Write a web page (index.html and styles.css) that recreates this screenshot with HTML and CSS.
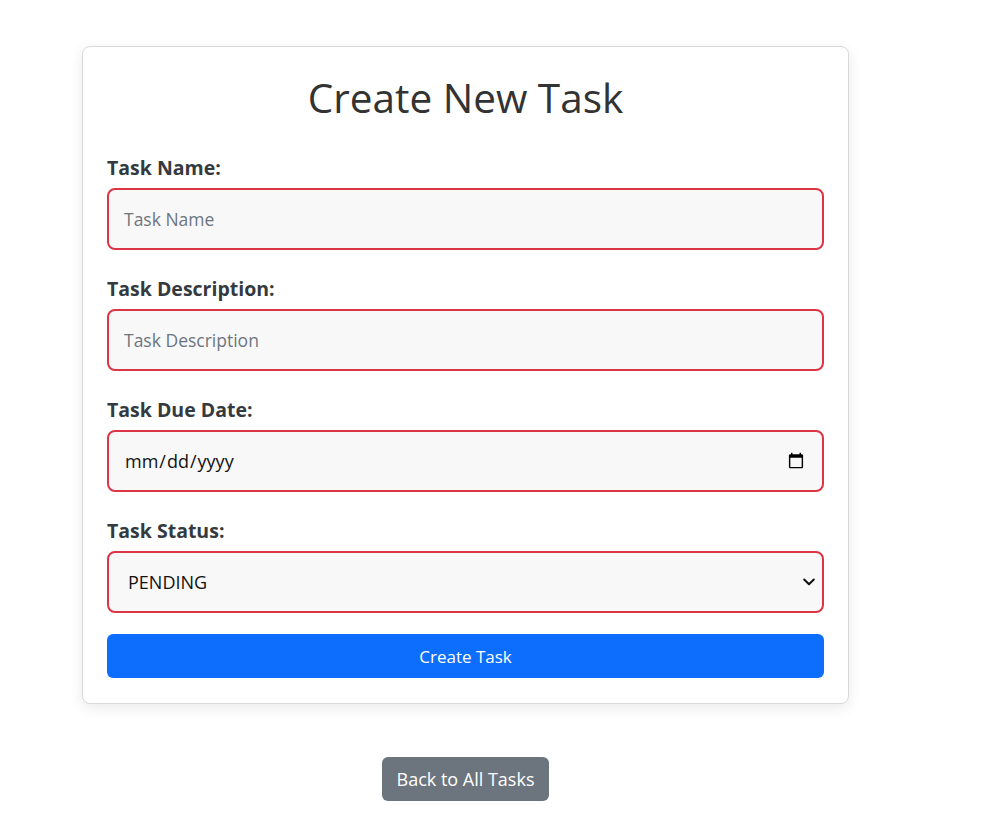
FILE: index.html
```html
<!DOCTYPE html>
<html lang="en">
<head>
<meta charset="utf-8">
<title>Create New Task</title>
<link rel="stylesheet" href="styles.css">
</head>
<body>
<main class="page">
  <div class="column">
    <form class="card">
      <h1 class="title">Create New Task</h1>
      <div class="field">
        <label class="label" for="name">Task Name:</label>
        <input class="control" id="name" type="text" placeholder="Task Name">
      </div>
      <div class="field">
        <label class="label" for="desc">Task Description:</label>
        <input class="control" id="desc" type="text" placeholder="Task Description">
      </div>
      <div class="field">
        <label class="label" for="due">Task Due Date:</label>
        <input class="control date" id="due" type="date">
      </div>
      <div class="field field-last">
        <label class="label" for="status">Task Status:</label>
        <div class="select-wrap">
          <select class="control select" id="status">
            <option>PENDING</option>
            <option>IN PROGRESS</option>
            <option>COMPLETED</option>
          </select>
          <svg class="chevron" width="12" height="8" viewBox="0 0 12 8" aria-hidden="true">
            <path d="M1.2 1.5 L6 6.3 L10.8 1.5" fill="none" stroke="#111" stroke-width="2" stroke-linecap="round" stroke-linejoin="round"/>
          </svg>
        </div>
      </div>
      <button class="btn btn-primary" type="button">Create Task</button>
    </form>
    <div class="back-row">
      <a class="btn btn-secondary" href="#">Back to All Tasks</a>
    </div>
  </div>
</main>
</body>
</html>
```
FILE: styles.css
```css
* { box-sizing: border-box; }
html, body { margin: 0; padding: 0; background: #fff; }
body {
  font-family: "Open Sans", "Noto Sans", sans-serif;
  color: #212529;
}
.page {
  padding: 46px 0 0 82px;
}
.column {
  width: 767px;
  display: flex;
  flex-direction: column;
}
.card {
  background: #fff;
  border: 1px solid #d9d9d9;
  border-radius: 8px;
  padding: 24px 24px 25px;
  box-shadow: 0 4px 14px rgba(0,0,0,0.09);
  display: flex;
  flex-direction: column;
}
.title {
  margin: 0 0 29px;
  text-align: center;
  font-size: 40.5px;
  line-height: 54px;
  font-weight: 400;
  color: #333;
}
.field {
  display: flex;
  flex-direction: column;
  margin-bottom: 25px;
}
.field-last { margin-bottom: 21px; }
.label {
  font-size: 19.5px;
  line-height: 28px;
  font-weight: 700;
  color: #343a40;
  margin-bottom: 6px;
}
.control {
  height: 62px;
  width: 100%;
  border: 2px solid #dc3545;
  border-radius: 8px;
  background: #f8f8f8;
  padding: 0 15px;
  font-family: inherit;
  font-size: 17.5px;
  color: #111;
  outline: none;
}
.control::placeholder { color: #6c757d; }
.date { font-size: 18px; }
.select-wrap {
  position: relative;
}
.select {
  appearance: none;
  -webkit-appearance: none;
  padding-left: 19px;
  font-size: 18px;
}
.chevron {
  position: absolute;
  right: 9px;
  top: 27px;
  pointer-events: none;
}
.btn {
  display: inline-flex;
  align-items: center;
  justify-content: center;
  height: 44px;
  border: none;
  border-radius: 6px;
  font-family: inherit;
  font-size: 17px;
  color: #fff;
  text-decoration: none;
  cursor: pointer;
}
.btn-primary {
  width: 100%;
  background: #0d6efd;
}
.back-row {
  display: flex;
  justify-content: center;
  margin-top: 53px;
}
.btn-secondary {
  background: #6c757d;
  font-size: 18px;
  padding: 0 15px;
}
```
